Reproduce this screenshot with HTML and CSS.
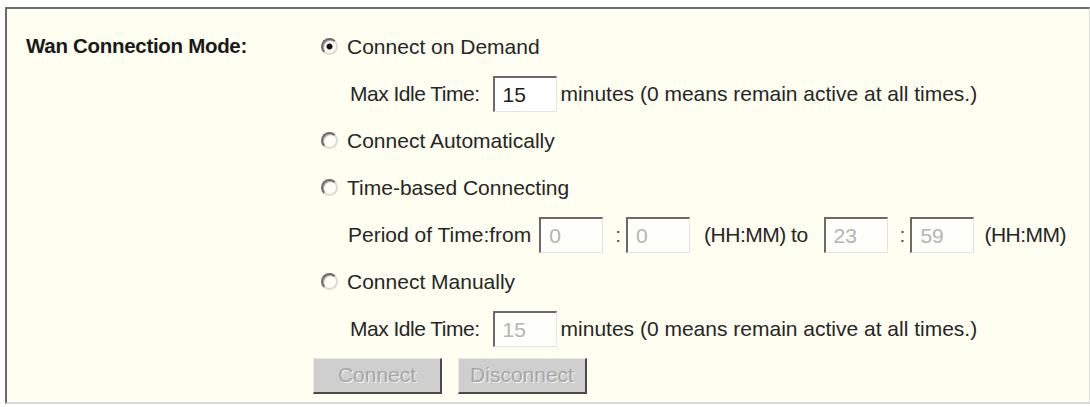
FILE: index.html
```html
<!DOCTYPE html>
<html>
<head>
<meta charset="utf-8">
<link rel="stylesheet" href="styles.css">
</head>
<body>
<div class="frame">
  <div class="label">Wan Connection Mode:</div>
  <div class="options">
    <div class="row radio-row">
      <input type="radio" name="mode" class="radio" checked>
      <span>Connect on Demand</span>
    </div>
    <div class="row sub-row">
      <span class="idle-label">Max Idle Time:</span>
      <input type="text" class="box" value="15">
      <span class="after-box">minutes (0 means remain active at all times.)</span>
    </div>
    <div class="row radio-row">
      <input type="radio" name="mode" class="radio">
      <span>Connect Automatically</span>
    </div>
    <div class="row radio-row">
      <input type="radio" name="mode" class="radio">
      <span>Time-based Connecting</span>
    </div>
    <div class="row sub-row period">
      <span class="period-label">Period of Time:from</span>
      <input type="text" class="box dim" value="0" readonly>
      <span class="colon">:</span>
      <input type="text" class="box dim" value="0" readonly>
      <span class="hhmm-to">(HH:MM) to</span>
      <input type="text" class="box dim" value="23" readonly>
      <span class="colon">:</span>
      <input type="text" class="box dim" value="59" readonly>
      <span class="hhmm">(HH:MM)</span>
    </div>
    <div class="row radio-row">
      <input type="radio" name="mode" class="radio">
      <span>Connect Manually</span>
    </div>
    <div class="row sub-row">
      <span class="idle-label">Max Idle Time:</span>
      <input type="text" class="box dim" value="15" readonly>
      <span class="after-box">minutes (0 means remain active at all times.)</span>
    </div>
    <div class="row button-row">
      <button class="btn" type="button">Connect</button>
      <button class="btn" type="button">Disconnect</button>
    </div>
  </div>
</div>
</body>
</html>
```

FILE: styles.css
```css
html, body {
  margin: 0;
  padding: 0;
  background: #ffffff;
}

body {
  width: 1090px;
  height: 407px;
  overflow: hidden;
  font-family: "Liberation Sans", Arial, sans-serif;
  font-size: 21px;
  color: #262626;
}

.frame {
  margin: 7px 0 0 5px;
  height: 397px;
  box-sizing: border-box;
  border-style: solid;
  border-width: 2px 1px 2px 2px;
  border-color: #6b6b6b #dcdcdc #d6d6d6 #6b6b6b;
  background: #fefef1;
  padding: 14px 0 0 19px;
  display: grid;
  grid-template-columns: 295px 1fr;
}

.label {
  font-weight: bold;
  font-size: 20.5px;
  letter-spacing: -0.3px;
  color: #1a1a1a;
  height: 47px;
  line-height: 45px;
}

.options {
  display: flex;
  flex-direction: column;
}

.row {
  height: 47px;
  display: flex;
  align-items: center;
  white-space: nowrap;
}

.radio {
  appearance: none;
  -webkit-appearance: none;
  margin: 0 9px 0 0;
  width: 17px;
  height: 17px;
  box-sizing: border-box;
  border-radius: 50%;
  border: 2px solid;
  border-color: #6a6a6a #dcdcd4 #dcdcd4 #6a6a6a;
  box-shadow: inset 1px 1px 0 #a8a8a8;
  background: #fdfdf6;
  flex: none;
}

.radio:checked {
  background: radial-gradient(circle, #111 0 2.6px, #fdfdf6 3.4px);
}

.sub-row {
  padding-left: 29px;
}

.idle-label {
  letter-spacing: -0.5px;
  margin-right: 13px;
}

.box {
  width: 64px;
  height: 36px;
  box-sizing: border-box;
  margin: 0;
  border-style: solid;
  border-width: 2px 1px 1px 2px;
  border-color: #6a6a6a #e2e2e2 #e2e2e2 #6a6a6a;
  background: #ffffff;
  font-family: "Liberation Sans", Arial, sans-serif;
  font-size: 21px;
  color: #1e1e1e;
  padding: 2px 0 0 8px;
  outline: none;
  flex: none;
}

.box.dim {
  color: #b4b4b4;
  background: #fefefa;
}

.after-box {
  margin-left: 4px;
}

.period-label {
  margin-left: -2px;
  margin-right: 8px;
}

.colon {
  margin: 0 5px 0 12px;
  color: #555;
}

.hhmm-to {
  margin: 0 16px 0 14px;
  letter-spacing: -0.5px;
}

.hhmm {
  margin-left: 10px;
  letter-spacing: -0.5px;
}

.button-row {
  margin-left: -8px;
  gap: 16px;
}

.btn {
  width: 129px;
  height: 36px;
  box-sizing: border-box;
  margin: 0;
  padding: 0;
  border-style: solid;
  border-width: 1px 2px 2px 1px;
  border-color: #e8e8e8 #4a4a4a #4a4a4a #e8e8e8;
  background: #cfcfcf;
  font-family: "Liberation Sans", Arial, sans-serif;
  font-size: 21px;
  color: #a6a6a6;
  text-shadow: 1px 1px 0 #f4f4f4;
  cursor: default;
}
```
